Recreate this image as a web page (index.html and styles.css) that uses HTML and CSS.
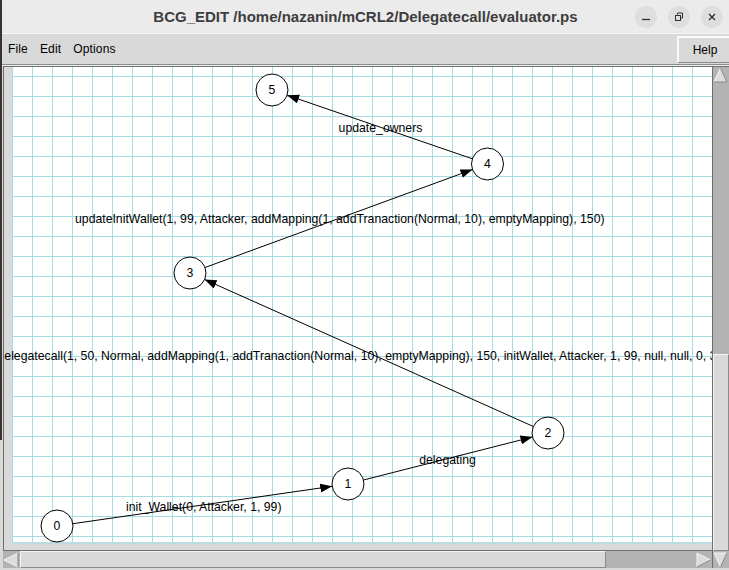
FILE: index.html
```html
<!DOCTYPE html>
<html>
<head>
<meta charset="utf-8">
<title>BCG_EDIT</title>
<link rel="stylesheet" href="styles.css">
</head>
<body>
<div class="window">
  <header class="titlebar">
    <div class="title">BCG_EDIT /home/nazanin/mCRL2/Delegatecall/evaluator.ps</div>
    <div class="controls">
      <span class="ctl"><svg width="22" height="22" viewBox="0 0 22 22"><path d="M7 13.5h8" stroke="#2e2e2e" stroke-width="1.3" fill="none"/></svg></span>
      <span class="ctl"><svg width="22" height="22" viewBox="0 0 22 22"><path d="M9.5 8.5v-1.5h5v5h-1.5" stroke="#2e2e2e" stroke-width="1" fill="none"/><rect x="7.5" y="9.5" width="5" height="5" stroke="#2e2e2e" stroke-width="1" fill="none"/></svg></span>
      <span class="ctl"><svg width="22" height="22" viewBox="0 0 22 22"><path d="M8 8l6 6M14 8l-6 6" stroke="#2e2e2e" stroke-width="1.3" fill="none"/></svg></span>
    </div>
  </header>
  <nav class="menubar">
    <span class="menu">File</span>
    <span class="menu">Edit</span>
    <span class="menu">Options</span>
    <span class="help">Help</span>
  </nav>
  <div class="workspace">
    <div class="canvas">
      <svg width="708" height="483" viewBox="0 0 708 483" xmlns="http://www.w3.org/2000/svg">
        <defs>
          <pattern id="grid" patternUnits="userSpaceOnUse" x="12" y="76" width="20" height="20">
            <path d="M0.5 0V20M0 0.5H20" stroke="#a6dae5" stroke-width="1" fill="none"/>
          </pattern>
          <marker id="arr" markerUnits="userSpaceOnUse" markerWidth="13" markerHeight="10" refX="12" refY="4.5" orient="auto">
            <path d="M0 0L12 4.5L0 9z" fill="#000"/>
          </marker>
        </defs>
        <g transform="translate(-4,-67)">
          <rect x="12" y="67" width="700" height="475" fill="#fff"/>
          <rect x="12" y="67" width="700" height="475" fill="url(#grid)"/>
          <rect x="12" y="542" width="700" height="2" fill="#bcdbe2"/>

          <g class="edges" stroke="#000" stroke-width="1" fill="none">
            <line x1="72.8" y1="523.7" x2="332.2" y2="486.3" marker-end="url(#arr)"/>
            <line x1="363.5" y1="480" x2="532.5" y2="437" marker-end="url(#arr)"/>
            <line x1="533.4" y1="426.5" x2="204.6" y2="279.5" marker-end="url(#arr)"/>
            <line x1="205" y1="267.5" x2="472.5" y2="169.5" marker-end="url(#arr)"/>
            <line x1="472.4" y1="158.8" x2="287.1" y2="95.2" marker-end="url(#arr)"/>
          </g>

          <g class="labels">
            <text x="380.5" y="131.5" text-anchor="middle">update_owners</text>
            <text x="75" y="222.5">updateInitWallet(1, 99, Attacker, addMapping(1, addTranaction(Normal, 10), emptyMapping), 150)</text>
            <text x="-2.5" y="359.5">delegatecall(1, 50, Normal, addMapping(1, addTranaction(Normal, 10), emptyMapping), 150, initWallet, Attacker, 1, 99, null, null, 0, 3)</text>
            <text x="447.5" y="463.5" text-anchor="middle">delegating</text>
            <text x="126" y="510.5">init_Wallet(0, Attacker, 1, 99)</text>
          </g>

          <g class="nodes">
            <circle cx="57" cy="526" r="16"/>
            <circle cx="348" cy="484" r="16"/>
            <circle cx="548" cy="433" r="16"/>
            <circle cx="190" cy="273" r="16"/>
            <circle cx="487.5" cy="164" r="16"/>
            <circle cx="272" cy="90" r="16"/>
          </g>
          <g class="labels" text-anchor="middle">
            <text x="57" y="530">0</text>
            <text x="348" y="488">1</text>
            <text x="548" y="437">2</text>
            <text x="190" y="277">3</text>
            <text x="487.5" y="168">4</text>
            <text x="272" y="94">5</text>
          </g>
        </g>
      </svg>
    </div>
    <div class="vscroll">
      <span class="arrow"><svg width="16" height="17" viewBox="0 0 16 17"><path d="M1 15L7.5 1L14 15z" fill="#dcdcdc"/><path d="M1 15L7.5 1" stroke="#f6f6f6" fill="none"/><path d="M7.5 1L14 15H1" stroke="#8a8a8a" fill="none"/></svg></span>
      <span class="trough"></span>
      <span class="slider vslider"></span>
      <span class="arrow"><svg width="16" height="17" viewBox="0 0 16 17"><path d="M1 2H14L7.5 16z" fill="#dcdcdc"/><path d="M7.5 16L1 2H14" stroke="#f6f6f6" fill="none"/><path d="M14 2L7.5 16" stroke="#8a8a8a" fill="none"/></svg></span>
    </div>
    <div class="hscroll">
      <span class="arrow"><svg width="17" height="17" viewBox="0 0 17 17"><path d="M1 9L15 2V16z" fill="#dcdcdc"/><path d="M15 2L1 9L15 16" stroke="#f6f6f6" fill="none"/><path d="M15 2V16" stroke="#8a8a8a" fill="none"/></svg></span>
      <span class="slider hslider"></span>
      <span class="trough"></span>
      <span class="arrow"><svg width="17" height="17" viewBox="0 0 17 17"><path d="M2 2L15.5 9L2 16z" fill="#dcdcdc"/><path d="M2 16V2L15.5 9" stroke="#f6f6f6" fill="none"/><path d="M15.5 9L2 16" stroke="#8a8a8a" fill="none"/></svg></span>
    </div>
  </div>
</div>
</body>
</html>
```

FILE: styles.css
```css
* {
  box-sizing: border-box;
  margin: 0;
  padding: 0;
}

html,
body {
  width: 729px;
  height: 570px;
  overflow: hidden;
}

body {
  background: #d9d9d9;
  font-family: "Liberation Sans", Arial, sans-serif;
}

.window {
  position: relative;
  width: 729px;
  height: 570px;
  display: flex;
  flex-direction: column;
  background: #d9d9d9;
}

.window::before {
  content: "";
  position: absolute;
  left: 0;
  top: 0;
  width: 2px;
  height: 440px;
  background: #3a3333;
  z-index: 5;
}

.titlebar {
  height: 33px;
  flex: none;
  background: #ebebeb;
  display: grid;
  grid-template-columns: 1fr auto 1fr;
  align-items: center;
}

.title {
  grid-column: 2;
  font-family: "Liberation Sans", Arial, sans-serif;
  font-weight: bold;
  font-size: 15px;
  color: #3d3d3d;
  white-space: nowrap;
  padding-left: 2px;
}

.controls {
  grid-column: 3;
  justify-self: end;
  display: flex;
  gap: 11px;
  padding-right: 6px;
}

.ctl {
  width: 22px;
  height: 22px;
  border-radius: 50%;
  background: #dedede;
  display: flex;
}

.menubar {
  height: 32px;
  flex: none;
  border-top: 1px solid #f7f7f7;
  border-bottom: 1px solid #8c8c8c;
  display: flex;
  align-items: center;
  padding-left: 2px;
  font-size: 12px;
  color: #000;
  overflow: hidden;
}

.menu {
  padding: 0 6px;
  letter-spacing: 0.15px;
}

.help {
  margin-left: auto;
  align-self: flex-start;
  margin-top: 2px;
  width: 52px;
  height: 27px;
  display: flex;
  align-items: center;
  justify-content: center;
  border-top: 2px solid #fafafa;
  border-left: 2px solid #fafafa;
  border-bottom: 1px solid #8a8a8a;
  padding-left: 2px;
}

.workspace {
  flex: 1;
  border-top: 1px solid #f0f0f0;
  display: grid;
  grid-template-columns: 709px 17px;
  grid-template-rows: 484px 18px;
  padding-left: 3px;
}

.canvas {
  grid-row: 1;
  grid-column: 1;
  border-top: 1px solid #6e6e6e;
  border-left: 1px solid #6e6e6e;
  overflow: hidden;
  background: #d9d9d9;
}

.canvas svg {
  display: block;
}

.labels text {
  font-family: "Liberation Sans", Arial, sans-serif;
  font-size: 12.25px;
  fill: #000;
}

.nodes circle {
  fill: #fff;
  stroke: #000;
  stroke-width: 1;
}

.vscroll {
  grid-row: 1 / 3;
  grid-column: 2;
  border-top: 1px solid #6e6e6e;
  border-left: 1px solid #6e6e6e;
  background: #b3b3b3;
  display: flex;
  flex-direction: column;
}

.hscroll {
  grid-row: 2;
  grid-column: 1;
  border-top: 1px solid #6e6e6e;
  background: #b3b3b3;
  display: flex;
}

.arrow {
  flex: none;
  display: flex;
}

.arrow svg {
  display: block;
}

.trough {
  flex: 1;
}

.slider {
  flex: none;
  background: #d9d9d9;
  border-top: 1px solid #f5f5f5;
  border-left: 1px solid #f5f5f5;
  border-right: 1px solid #8a8a8a;
  border-bottom: 1px solid #8a8a8a;
}

.vslider {
  height: 197px;
}

.hslider {
  width: 586px;
}
```
